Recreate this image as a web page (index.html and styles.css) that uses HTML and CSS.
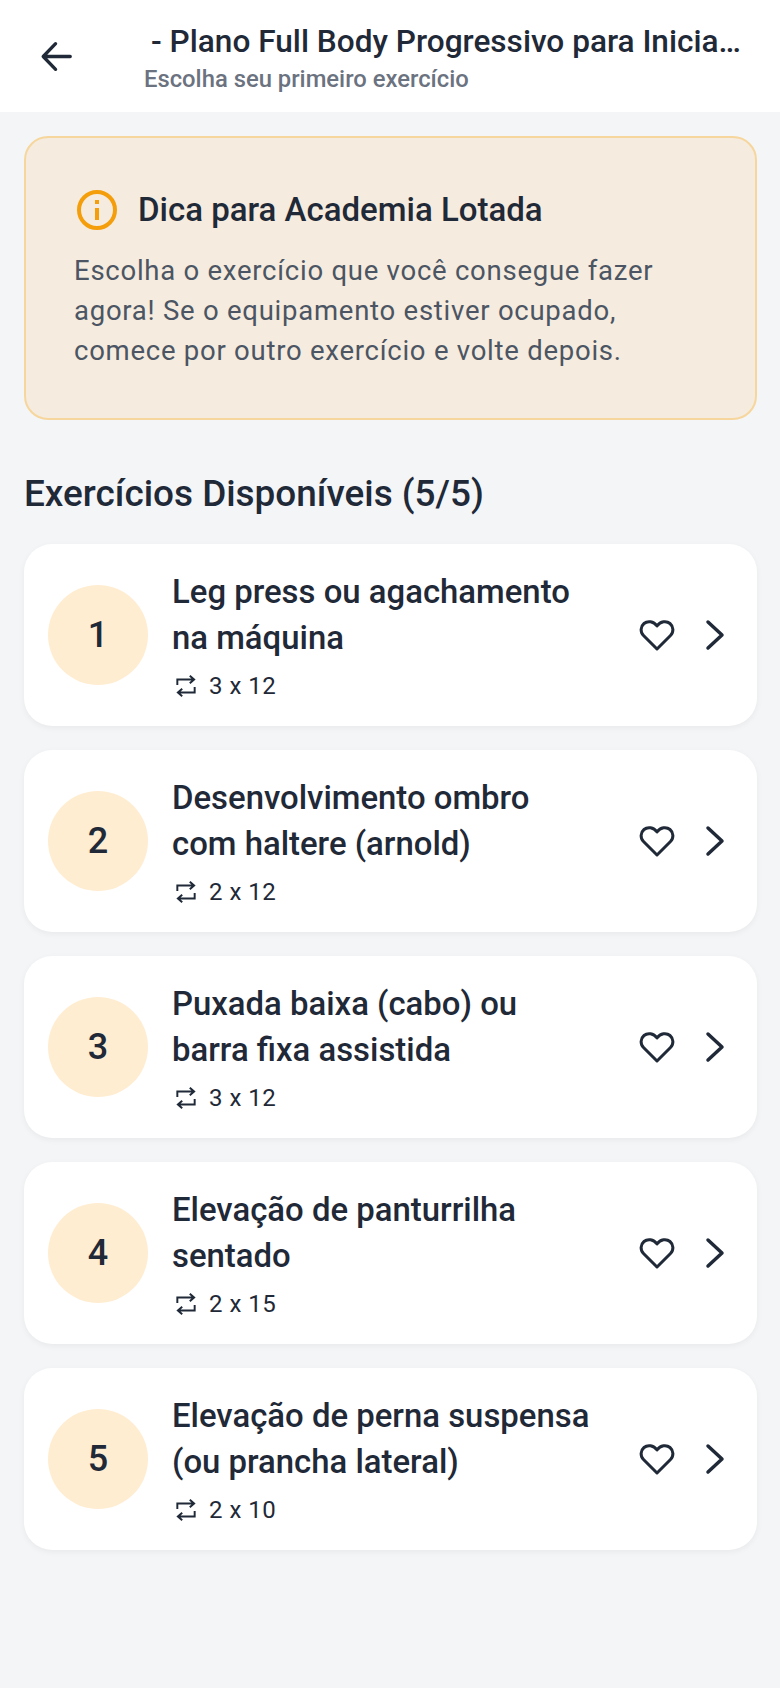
FILE: index.html
```html
<!DOCTYPE html>
<html lang="pt-BR">
<head>
  <meta charset="UTF-8">
  <meta name="viewport" content="width=device-width, initial-scale=1">
  <title>Plano Full Body Progressivo</title>
  <link rel="stylesheet" href="styles.css">
</head>
<body>

  <!-- ICONS -->
  <svg class="sprite" aria-hidden="true">
    <symbol id="i-rep" viewBox="0 0 24 24"><path d="M4 11V6h15M15.500 2.500 19.500 6l-4 3.500M20 13v5H5M8.500 14.500 4.500 18l4 3.500"/></symbol>
    <symbol id="i-heart" viewBox="0 0 36 36"><path d="M18 32 4.500 18.500C1 15 1.500 9.500 5 6.500 8.500 3.500 14.500 4 18 9c3.500-5 9.500-5.500 13-2.500 3.500 3 4 8.500.5 12z"/></symbol>
    <symbol id="i-chev" viewBox="0 0 20 32"><path d="M3 3l14 13L3 29"/></symbol>
  </svg>

  <!-- HEADER -->
  <header class="top-bar">
    <svg class="back-icon" viewBox="0 0 36 36" fill="none" stroke="#1f2937" stroke-width="3.600" stroke-linecap="round" stroke-linejoin="round">
      <path d="M33 18H3.500M17 4 3.500 18 17 32"/>
    </svg>
    <div class="top-titles">
      <div class="top-title">- Plano Full Body Progressivo para Inicia…</div>
      <div class="top-sub">Escolha seu primeiro exercício</div>
    </div>
  </header>

  <main class="content">
    <!-- TIP -->
    <section class="tip">
      <div class="tip-head">
        <svg class="tip-icon" viewBox="0 0 40 40" fill="none" stroke="#f59e0b">
          <circle cx="20" cy="20" r="18" stroke-width="4"/>
          <path d="M20 18v12" stroke-width="4"/>
          <path d="M20 10v4" stroke-width="4"/>
        </svg>
        <h2>Dica para Academia Lotada</h2>
      </div>
      <p>Escolha o exercício que você consegue fazer agora! Se o equipamento estiver ocupado, comece por outro exercício e volte depois.</p>
    </section>

    <h1 class="section-title">Exercícios Disponíveis (5/5)</h1>

    <!-- EXERCISES -->
    <div class="list">
      <article class="card">
        <div class="num">1</div>
        <div class="info">
          <h3>Leg press ou agachamento<br>na máquina</h3>
          <div class="meta"><svg class="rep-icon"><use href="#i-rep"/></svg><span>3 x 12</span></div>
        </div>
        <svg class="heart"><use href="#i-heart"/></svg>
        <svg class="chev"><use href="#i-chev"/></svg>
      </article>

      <article class="card">
        <div class="num">2</div>
        <div class="info">
          <h3>Desenvolvimento ombro<br>com haltere (arnold)</h3>
          <div class="meta"><svg class="rep-icon"><use href="#i-rep"/></svg><span>2 x 12</span></div>
        </div>
        <svg class="heart"><use href="#i-heart"/></svg>
        <svg class="chev"><use href="#i-chev"/></svg>
      </article>

      <article class="card">
        <div class="num">3</div>
        <div class="info">
          <h3>Puxada baixa (cabo) ou<br>barra fixa assistida</h3>
          <div class="meta"><svg class="rep-icon"><use href="#i-rep"/></svg><span>3 x 12</span></div>
        </div>
        <svg class="heart"><use href="#i-heart"/></svg>
        <svg class="chev"><use href="#i-chev"/></svg>
      </article>

      <article class="card">
        <div class="num">4</div>
        <div class="info">
          <h3>Elevação de panturrilha<br>sentado</h3>
          <div class="meta"><svg class="rep-icon"><use href="#i-rep"/></svg><span>2 x 15</span></div>
        </div>
        <svg class="heart"><use href="#i-heart"/></svg>
        <svg class="chev"><use href="#i-chev"/></svg>
      </article>

      <article class="card">
        <div class="num">5</div>
        <div class="info">
          <h3>Elevação de perna suspensa<br>(ou prancha lateral)</h3>
          <div class="meta"><svg class="rep-icon"><use href="#i-rep"/></svg><span>2 x 10</span></div>
        </div>
        <svg class="heart"><use href="#i-heart"/></svg>
        <svg class="chev"><use href="#i-chev"/></svg>
      </article>
    </div>
  </main>

</body>
</html>
```

FILE: styles.css
```css
* { box-sizing: border-box; }
html, body { margin: 0; padding: 0; }
body {
  font-family: Roboto, "Liberation Sans", sans-serif;
  background: #f4f5f7;
  color: #1f2937;
  height: 1688px;
  overflow: hidden;
}
.sprite { display: none; }

.top-bar {
  height: 112px;
  background: #fff;
  display: flex;
  padding: 23px 0 0 40px;
}
.back-icon { width: 33px; height: 33px; margin-top: 17px; flex: none; }
.top-titles { margin-left: 71px; }
.top-title { font-size: 31.600px; line-height: 38px; font-weight: 500; padding-left: 7px; white-space: nowrap; }
.top-sub { font-size: 23.800px; line-height: 30px; margin-top: 3px; color: #6b7280; font-weight: 500; }

.content { padding: 24px 23px 0 24px; }
.tip {
  height: 284px;
  background: #f5ebde;
  border: 2px solid #f6d69d;
  border-radius: 24px;
  padding: 51px 48px 0;
}
.tip-head { display: flex; align-items: center; gap: 21px; margin-left: 3px; }
.tip-icon { width: 40px; height: 40px; flex: none; }
.tip h2 { margin: 0; font-size: 33px; line-height: 42px; font-weight: 500; }
.tip p { margin: 20px 0 0; font-size: 27.500px; line-height: 40px; color: #4b5563; letter-spacing: 0.75px; }

.section-title { margin: 52px 0 0; font-size: 36.900px; line-height: 44px; font-weight: 500; }

.list { display: flex; flex-direction: column; gap: 24px; margin-top: 28px; }
.card {
  height: 182px;
  background: #fff;
  border-radius: 28px;
  box-shadow: 0 2px 6px rgba(0,0,0,0.05);
  display: flex;
  align-items: center;
  padding: 0 32px 0 24px;
}
.num {
  width: 100px;
  height: 100px;
  border-radius: 50%;
  background: #ffedd2;
  display: flex;
  align-items: center;
  justify-content: center;
  font-size: 36px;
  font-weight: 500;
  flex: none;
}
.info { flex: 1; margin-left: 24px; }
.info h3 { margin: 0; font-size: 32.900px; line-height: 46px; font-weight: 500; }
.meta { display: flex; align-items: center; gap: 10px; margin-top: 10px; padding-left: 1px; font-size: 24px; line-height: 30px; letter-spacing: 0.5px; }
.rep-icon { width: 26px; height: 26px; flex: none; fill: none; stroke: #1f2937; stroke-width: 1.800; }
.heart { width: 36px; height: 36px; flex: none; margin-right: 2px; fill: none; stroke: #1f2937; stroke-width: 3; stroke-linejoin: round; }
.chev { width: 20px; height: 32px; flex: none; margin-left: 28px; fill: none; stroke: #1f2937; stroke-width: 3.500; stroke-linecap: round; stroke-linejoin: round; }
```
